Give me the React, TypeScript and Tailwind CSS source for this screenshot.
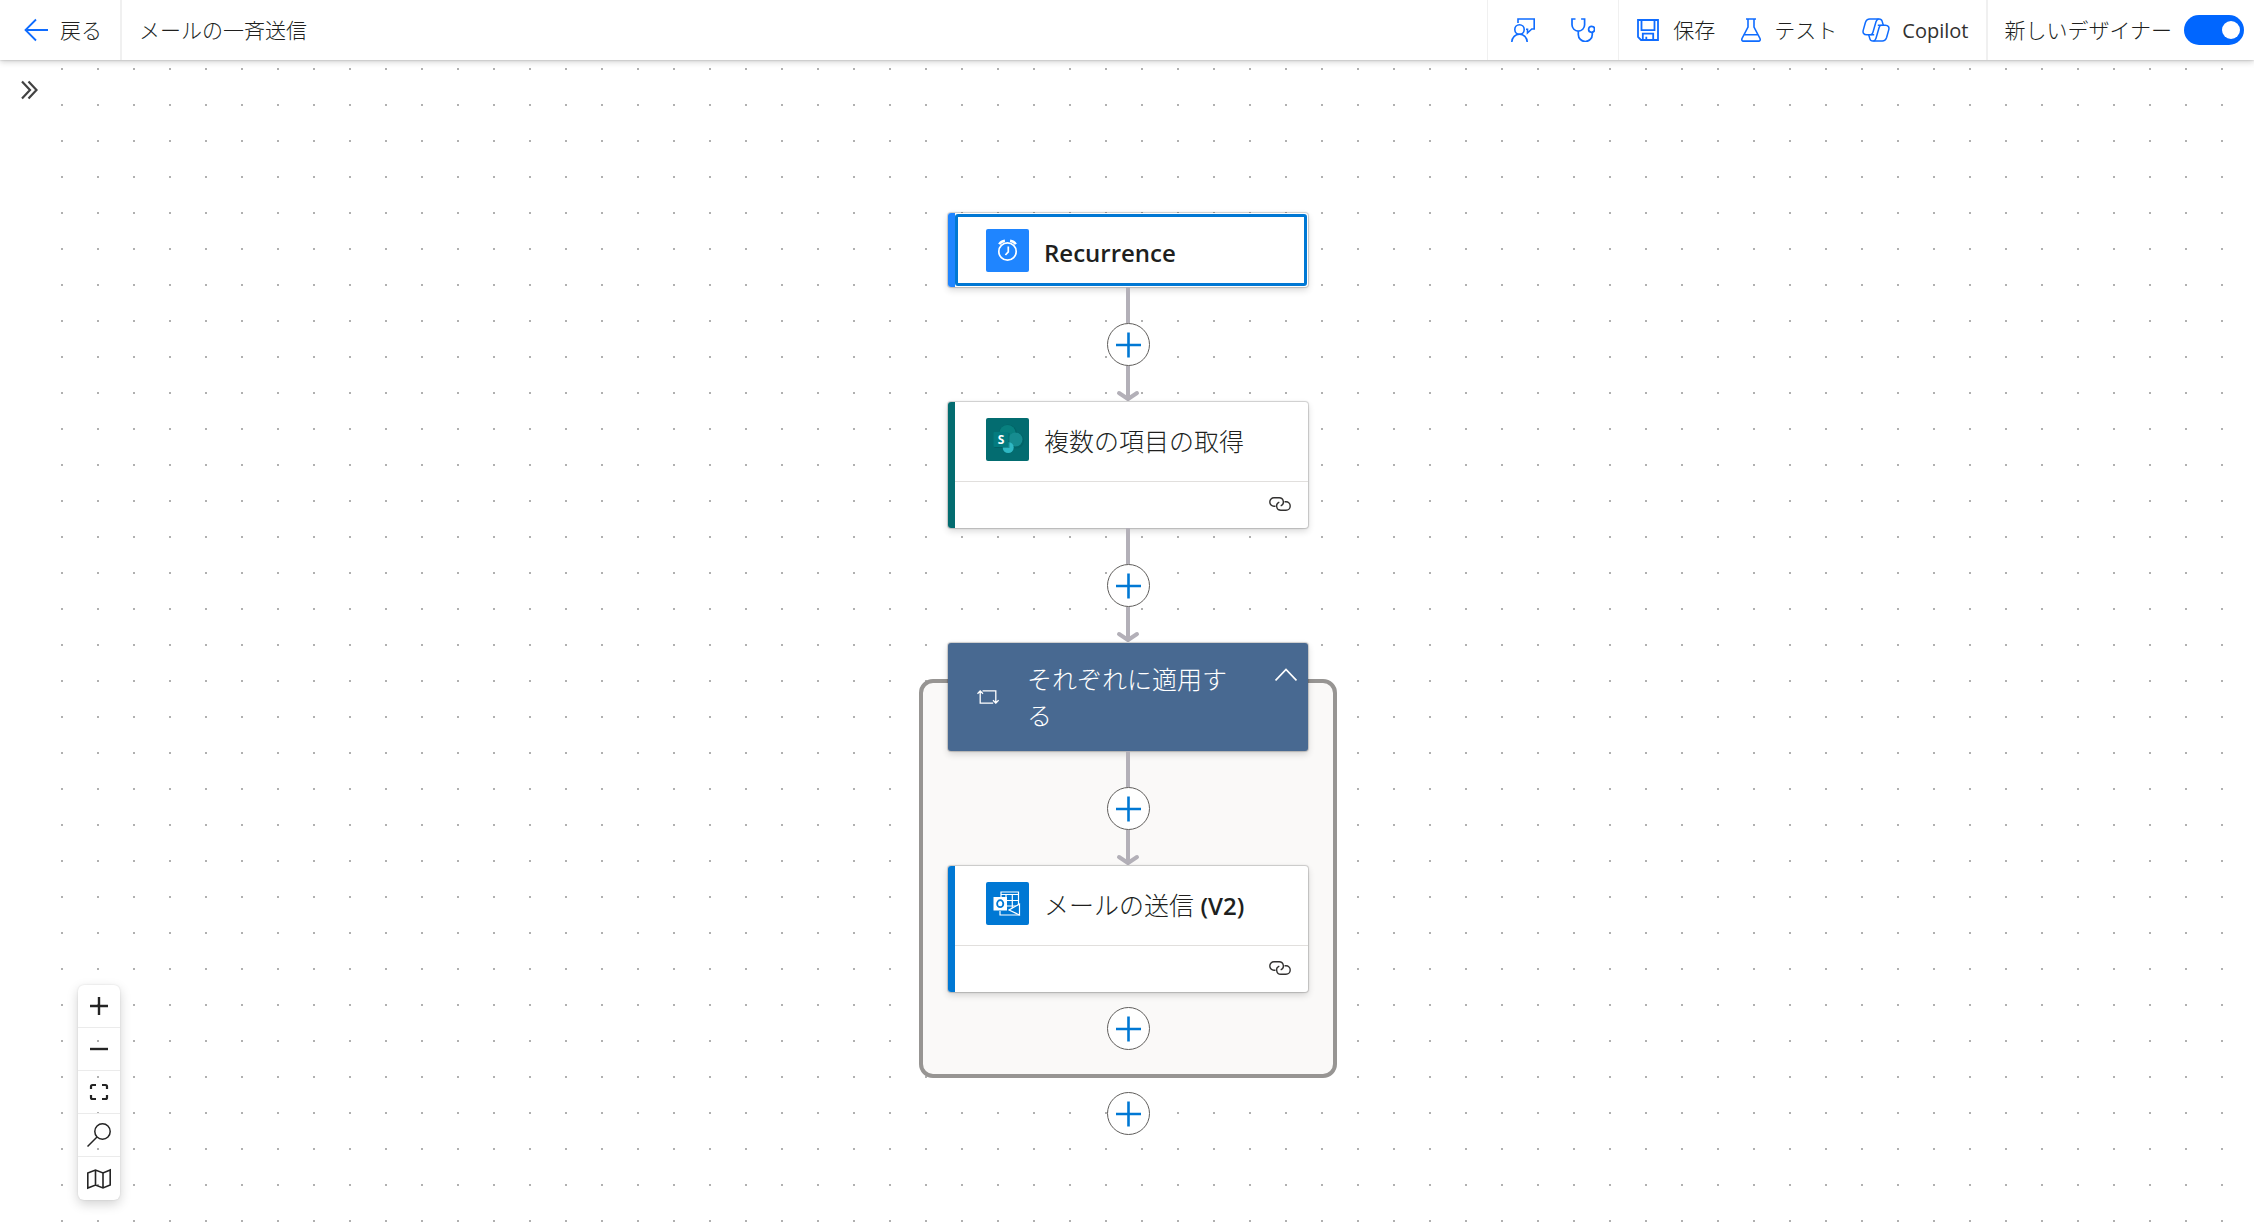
import { useState, type ReactNode } from 'react';
import { clsx } from 'clsx';

type NodeProps = {
  title: ReactNode;
  icon: ReactNode;
  accent: string;
  selected?: boolean;
  connected?: boolean;
};

function BackIcon() {
  return (
    <svg viewBox="0 0 24 24" className="size-6" fill="none" stroke="#0f6cff" strokeWidth="1.8">
      <path d="M24 12H1M12 1.5 1.5 12 12 22.5" />
    </svg>
  );
}

function FeedbackIcon() {
  return (
    <svg viewBox="0 0 24 24" className="size-6" fill="none" stroke="#0f6cff" strokeWidth="1.6">
      <path d="M7 5V1h16.2v10h-2.4l-4.3 4v-3.800h-1.500" />
      <circle cx="8.500" cy="11.500" r="4.700" />
      <path d="M.8 24c.2-4.700 3.500-7.800 7.700-7.800s7.500 3.100 7.700 7.800" />
    </svg>
  );
}

function CheckerIcon() {
  return (
    <svg viewBox="0 0 24 24" className="size-6" fill="none" stroke="#0f6cff" strokeWidth="1.7">
      <path d="M4.500 1H1v5.800a6.300 6.300 0 0 0 12.600 0V1h-3.500" />
      <path d="M7.300 13.200v3.300a7 7 0 0 0 14 0v-2" />
      <circle cx="20.600" cy="11.300" r="3" />
    </svg>
  );
}

function SaveIcon() {
  return (
    <svg viewBox="0 0 22 22" className="size-[22px]" fill="none" stroke="#0f6cff" strokeWidth="1.8">
      <path d="M1 1h20v20H4l-3-3z" />
      <path d="M4.500 1v10.200h13V1M5.800 21v-6.300h10.400V21M9.300 21v-3.200" />
    </svg>
  );
}

function FlaskIcon() {
  return (
    <svg viewBox="-1 0 22 24" className="h-6 w-[22px]" fill="none" stroke="#0f6cff" strokeWidth="1.6">
      <path d="M5 1h10M7 1v8L1 20.500c-.6 1.400 0 2.600 1.400 2.600h15.200c1.400 0 2-1.200 1.400-2.600L13 9V1M3.500 16.700h13" />
    </svg>
  );
}

function CopilotIcon() {
  return (
    <svg viewBox="0 0 28 24" className="h-6 w-7" fill="none" stroke="#0f6cff" strokeWidth="1.500" strokeLinejoin="round">
      <path d="M12.200 16.800H4.600C1.800 16.800.6 14.900 1.200 12.400L3.400 4.500C4.100 2.200 5.500.9 7.800.9h9.400c1.600 0 2.500.8 2.900 2.200l1.200 4.100" />
      <path d="M15.800 7.200h7.600c2.800 0 4 1.900 3.400 4.400l-2.200 7.900c-.7 2.300-2.100 3.600-4.400 3.600h-9.400c-1.600 0-2.500-.8-2.900-2.200l-1.200-4.100" />
      <path d="M16.600.9c-1.500.3-2.100 1.300-2.600 2.900l-3.200 11c-.4 1.300-1 2-2.300 2" />
      <path d="M11.400 23.100c1.500-.3 2.100-1.300 2.600-2.900l3.200-11c.4-1.300 1-2 2.300-2" />
    </svg>
  );
}

function LinkIcon() {
  return (
    <svg viewBox="0 0 22 14" className="h-3.5 w-[22px]" fill="none" stroke="#323130" strokeWidth="1.400">
      <path d="M6.500 9.200H5A4.200 4.200 0 0 1 5 .8h5.200a4.200 4.200 0 0 1 1.500 8.100" />
      <path d="M15.500 4.800H17a4.200 4.200 0 0 1 0 8.400h-5.200a4.200 4.200 0 0 1-1.500-8.100" />
    </svg>
  );
}

function LoopIcon() {
  return (
    <svg viewBox="0 0 22 14" className="h-3.5 w-[22px]" fill="none" stroke="white" strokeWidth="1.300">
      <path d="M5.500.9h13.300v12M16 10.200l2.800 2.900 2.800-2.900M16.200 13.100H3.200V1.100M.5 3.800 3.200.9 6 3.800" />
    </svg>
  );
}

function RecurrenceLogo() {
  return (
    <svg viewBox="0 0 43 43" className="size-[43px] rounded-[2px] bg-[#1f85ff]" fill="none" stroke="white">
      <circle cx="21.500" cy="22.500" r="8.700" strokeWidth="1.700" />
      <path d="M22.300 17.500v5.300L19.400 26" strokeWidth="1.700" />
      <path d="M13.200 15.300c1.200-2.200 3.200-3.400 5.700-3.600M29.800 15.300c-1.200-2.200-3.200-3.400-5.700-3.600" strokeWidth="2.400" />
    </svg>
  );
}

function SharePointLogo() {
  return (
    <svg viewBox="0 0 43 43" className="size-[43px] rounded-[2px] bg-[#036c70]">
      <circle cx="22" cy="15.500" r="9" fill="#025d60" opacity=".5" />
      <circle cx="30" cy="22.500" r="8" fill="#025d60" opacity=".5" />
      <circle cx="21.500" cy="15" r="8" fill="#08807f" />
      <circle cx="29.500" cy="21.500" r="7" fill="#168c90" />
      <circle cx="22.200" cy="29.500" r="5.500" fill="#2fb8c3" />
      <path d="M8.500 15h15v15h-15z" fill="#025256" opacity=".45" />
      <rect x="7.500" y="14" width="15" height="15" rx="1" fill="#037b7f" />
      <text x="15" y="26" textAnchor="middle" fill="white" className="font-['Open_Sans',sans-serif] text-[12px] font-bold">
        S
      </text>
    </svg>
  );
}

function OutlookLogo() {
  return (
    <svg viewBox="0 0 43 43" className="size-[43px] rounded-[2px] bg-[#0078d4]" fill="none" stroke="white">
      <path d="M15 15v-5h17.500v23H14v-4M15 12.500h17.500M20 12.500V24M26.300 12.500V27M16 18.500h16M20 24h12" strokeWidth="1.200" />
      <path d="M33.500 22 23 28l10.500 5z" fill="#0078d4" strokeWidth="1.200" />
      <rect x="7.500" y="15" width="13.500" height="13.500" fill="white" stroke="none" />
      <ellipse cx="14.200" cy="21.700" rx="3.100" ry="3.500" stroke="#0078d4" strokeWidth="1.800" />
    </svg>
  );
}

function AddButton() {
  return (
    <button
      type="button"
      aria-label="+"
      className="flex size-[43px] items-center justify-center rounded-full border border-[#605e5c] bg-white"
    >
      <svg viewBox="0 0 26 26" className="size-[26px]" stroke="#0078d4" strokeWidth="2.600">
        <path d="M13.500.5v25M1 13h25" />
      </svg>
    </button>
  );
}

function Connector() {
  return (
    <div className="flex flex-col items-center">
      <div className="h-9 w-1 bg-[#b3b0b8]" />
      <AddButton />
      <svg viewBox="0 0 24 36" className="h-9 w-6" fill="none" stroke="#b3b0b8" strokeWidth="4">
        <path d="M12 0v33" />
        <path d="m3 27 9 6 9-6" strokeLinecap="round" strokeLinejoin="round" />
      </svg>
    </div>
  );
}

function FlowNode({ title, icon, accent, selected, connected }: NodeProps) {
  return (
    <div className="flex w-[360px] rounded-[3px] bg-white shadow-[0_0_1px_1px_rgba(0,0,0,0.18),0_3px_7px_rgba(0,0,0,0.16)]">
      <div className={clsx('w-[7px] shrink-0 rounded-l-[3px]', accent)} />
      <div className="relative flex-1">
        {selected && <div className="absolute inset-y-px right-px left-0 rounded-[3px] border-3 border-[#0078d4]" />}
        <div className={clsx('flex items-start gap-[15px] pt-4 pl-[31px]', connected ? 'h-[79px]' : 'h-[74px]')}>
          {icon}
          <h2 className="pt-[5px] text-[25px] leading-9 text-[#201f1e]">{title}</h2>
        </div>
        {connected && (
          <div className="flex h-[47px] items-center justify-end border-t border-[#e1dfdd] pr-[17px] pb-0.5">
            <LinkIcon />
          </div>
        )}
      </div>
    </div>
  );
}

function ScopeHeader() {
  return (
    <div className="flex h-[108px] w-[360px] items-center rounded-[3px] bg-[#486991] pl-[29px] text-white shadow-[0_0_1px_1px_rgba(0,0,0,0.18),0_3px_7px_rgba(0,0,0,0.16)]">
      <LoopIcon />
      <h2 className="ml-7 w-[220px] text-[25px] leading-9 font-light">それぞれに適用する</h2>
      <button type="button" aria-label="折りたたむ" className="mt-6 ml-7 self-start">
        <svg viewBox="0 0 22 16" className="h-4 w-[22px]" fill="none" stroke="white" strokeWidth="1.800">
          <path d="M.5 13.500 11 2.500l10.500 11" />
        </svg>
      </button>
    </div>
  );
}

const ZOOM_CONTROLS = [
  {
    label: '拡大',
    icon: <path d="M12 3v18M3 12h18" strokeWidth="2.400" />,
  },
  {
    label: '縮小',
    icon: <path d="M3 12h18" strokeWidth="2.400" />,
  },
  {
    label: '全体を表示',
    icon: <path d="M9 5H5.500Q4 5 4 6.500V9M15 5h3.500Q20 5 20 6.500V9M9 19H5.500Q4 19 4 17.500V15M15 19h3.500q1.500 0 1.500-1.500V15" strokeWidth="2.200" />,
  },
  {
    label: '検索',
    icon: (
      <g strokeWidth="1.500">
        <circle cx="15.500" cy="8.500" r="7.700" />
        <path d="M10 14 .5 23.500" />
      </g>
    ),
  },
  {
    label: 'ミニマップ',
    icon: <path d="M.8 6 8.500 3l7.500 3 7.200-3v15L16 21l-7.500-3-7.700 3zM8.500 3v15M16 6v15" strokeWidth="1.600" />,
  },
];

export default function App() {
  const [newDesigner, setNewDesigner] = useState(true);

  return (
    <div className="flex min-h-screen flex-col bg-white font-['Open_Sans','Noto_Sans_CJK_JP',sans-serif] text-[#201f1e]">
      <header className="relative z-10 flex h-[60px] items-stretch bg-white text-[21px] font-light shadow-[0_0_2px_rgba(0,0,0,0.25),0_2px_6px_rgba(0,0,0,0.18)]">
        <button type="button" className="flex items-center gap-3 border-r-2 border-[#f0f0f0] pr-[18px] pl-6">
          <BackIcon />
          <span className="pt-0.5">戻る</span>
        </button>
        <h1 className="flex items-center pt-0.5 pl-[17px]">メールの一斉送信</h1>
        <div className="ml-auto flex items-center gap-9 border-x border-[#f0f0f0] px-[23px]">
          <button type="button" aria-label="フィードバック">
            <FeedbackIcon />
          </button>
          <button type="button" aria-label="フロー チェッカー">
            <CheckerIcon />
          </button>
        </div>
        <div className="flex items-center gap-[25px] px-[18px]">
          <button type="button" className="flex items-center gap-3.5">
            <SaveIcon />
            <span className="pt-0.5">保存</span>
          </button>
          <button type="button" className="flex items-center gap-3">
            <FlaskIcon />
            <span className="pt-0.5">テスト</span>
          </button>
          <button type="button" className="flex items-center gap-3">
            <CopilotIcon />
            <span className="pt-0.5 text-[20px] font-normal text-[#323130]">Copilot</span>
          </button>
        </div>
        <div className="flex items-center gap-3 border-l-2 border-[#f0f0f0] pr-[10px] pl-4">
          <label htmlFor="new-designer" className="pt-0.5">
            新しいデザイナー
          </label>
          <input
            id="new-designer"
            type="checkbox"
            role="switch"
            checked={newDesigner}
            onChange={(e) => setNewDesigner(e.target.checked)}
            className="flex h-[30px] w-[60px] appearance-none items-center rounded-full bg-gray-400 px-1 before:size-[18px] before:rounded-full before:bg-white checked:justify-end checked:bg-[#0066ff]"
          />
        </div>
      </header>

      <div className="flex flex-1">
        <aside className="w-14 shrink-0 pt-5 pl-5">
          <button type="button" aria-label="展開" className="block">
            <svg viewBox="0 0 18 20" className="h-5 w-[18px]" fill="none" stroke="#424242" strokeWidth="2.200">
              <path d="m2 1.500 8 8.500-8 8.500M8.500 1.500l8 8.500-8 8.500" />
            </svg>
          </button>
        </aside>

        <main className="relative flex flex-1 flex-col items-center bg-[radial-gradient(circle,#b0b0b0_1px,transparent_1.5px)] bg-size-[36px_36px] bg-position-[-12px_-9px] pt-[153px] pr-[54px] pb-20">
          <FlowNode
            title={<span className="text-2xl font-semibold">Recurrence</span>}
            icon={<RecurrenceLogo />}
            accent="bg-[#1f85ff]"
            selected
          />
          <Connector />
          <FlowNode
            title={<span className="font-light">複数の項目の取得</span>}
            icon={<SharePointLogo />}
            accent="bg-[#036c70]"
            connected
          />
          <Connector />
          <section className="mt-9 flex w-[418px] flex-col items-center rounded-[14px] border-4 border-[#979593] bg-[#faf9f8] pb-6">
            <div className="-mt-10">
              <ScopeHeader />
            </div>
            <Connector />
            <FlowNode
              title={
                <>
                  <span className="font-light">メールの送信</span> <span className="text-2xl font-semibold">(V2)</span>
                </>
              }
              icon={<OutlookLogo />}
              accent="bg-[#0078d4]"
              connected
            />
            <div className="mt-[15px]">
              <AddButton />
            </div>
          </section>
          <div className="mt-3.5">
            <AddButton />
          </div>

          <div className="absolute bottom-6 left-[22px] flex w-[42px] flex-col divide-y divide-[#ebebeb] rounded-md shadow-[0_0_2px_rgba(0,0,0,0.12),0_4px_12px_rgba(0,0,0,0.18)]">
            {ZOOM_CONTROLS.map((c) => (
              <button key={c.label} type="button" aria-label={c.label} className="flex h-[43px] items-center justify-center">
                <svg viewBox="0 0 24 24" className="size-6" fill="none" stroke="#242424">
                  {c.icon}
                </svg>
              </button>
            ))}
          </div>
        </main>
      </div>
    </div>
  );
}
